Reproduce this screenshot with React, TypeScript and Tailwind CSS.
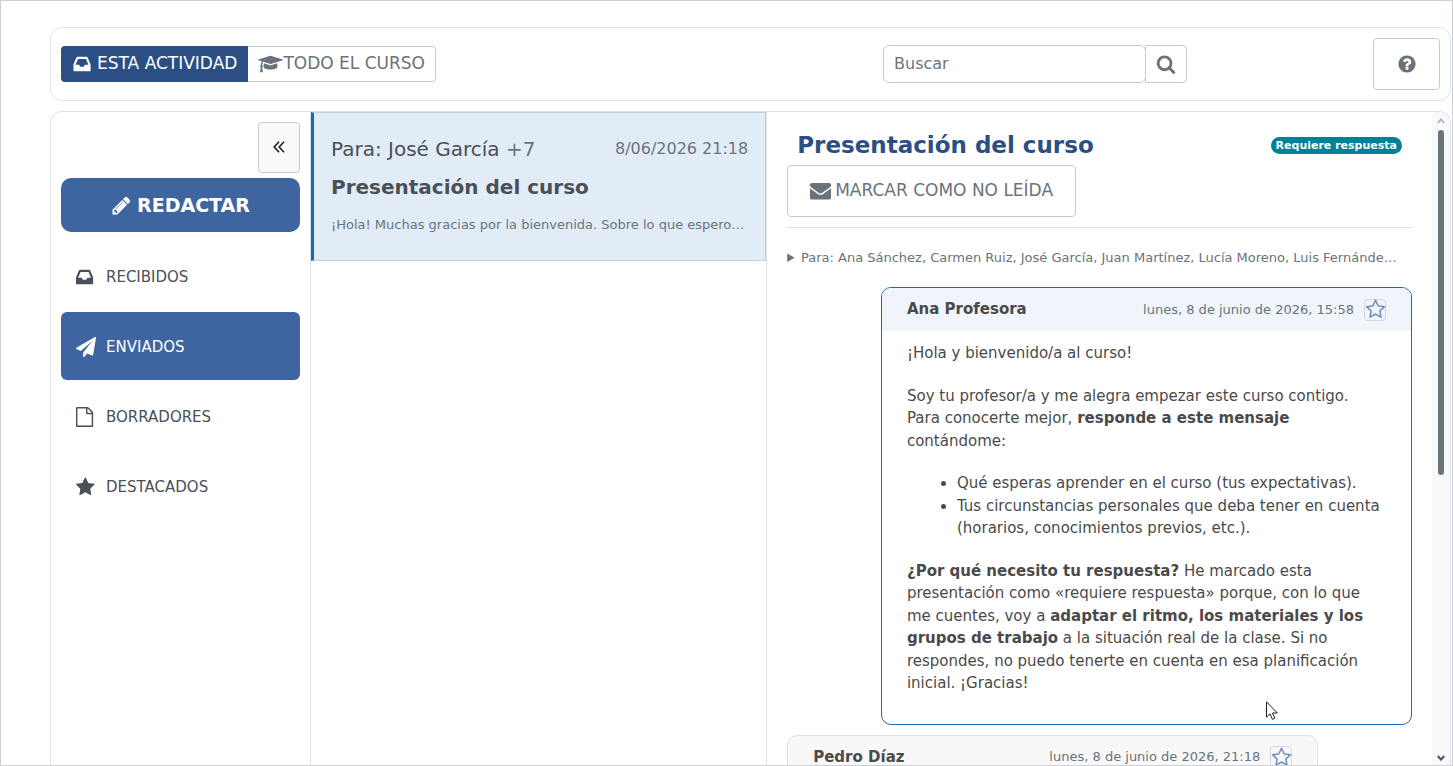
import type { ReactNode } from "react";

type IconProps = { d: string; className: string; viewBox?: string };

function Icon({ d, className, viewBox = "0 0 1792 1792" }: IconProps) {
  return (
    <svg viewBox={viewBox} className={className} fill="currentColor" aria-hidden="true">
      <path d={d} />
    </svg>
  );
}

const INBOX =
  "M1151 960h316q-1-3-2.5-8.5t-2.5-7.5l-212-496h-708l-212 496q-1 3-2.5 8.5t-2.5 7.5h316l95 192h320zm513 30v482q0 26-19 45t-45 19h-1408q-26 0-45-19t-19-45v-482q0-62 25-123l238-552q10-25 36.5-42t52.5-17h832q26 0 52.5 17t36.5 42l238 552q25 61 25 123z";
const PLANE =
  "M1764 11q33 24 27 64l-256 1536q-5 29-32 45-14 8-31 8-11 0-24-5l-453-185-242 295q-18 23-49 23-13 0-22-4-19-7-30.5-23.5t-11.5-36.5v-349l864-1059-1069 925-395-162q-37-14-40-55-2-40 32-59l1664-960q15-9 32-9 20 0 36 11z";
const FILE =
  "M1596 380q28 28 48 76t20 88v1152q0 40-28 68t-68 28h-1344q-40 0-68-28t-28-68v-1600q0-40 28-68t68-28h896q40 0 88 20t76 48zm-444-244v376h376q-10-29-22-41l-313-313q-12-12-41-22zm384 1528v-1024h-416q-40 0-68-28t-28-68v-416h-768v1536h1280z";
const STAR =
  "M1728 647q0 22-26 48l-363 354 86 500q1 7 1 20 0 21-10.5 35.5t-30.5 14.5q-19 0-40-12l-449-236-449 236q-22 12-40 12-21 0-31.5-14.5t-10.5-35.5q0-6 2-20l86-500-364-354q-25-27-25-48 0-37 56-46l502-73 225-455q19-41 49-41t49 41l225 455 502 73q56 9 56 46z";
const STAR_OUTLINE =
  "M1201 1004l306-297-422-62-189-382-189 382-422 62 306 297-73 421 378-199 377 199zm527-357q0 22-26 48l-363 354 86 500q1 7 1 20 0 50-41 50-19 0-40-12l-449-236-449 236q-22 12-40 12-21 0-31.5-14.5t-10.5-35.5q0-6 2-20l86-500-364-354q-25-27-25-48 0-37 56-46l502-73 225-455q19-41 49-41t49 41l225 455 502 73q56 9 56 46z";
const SEARCH =
  "M1216 832q0-185-131.5-316.5t-316.5-131.5-316.5 131.5-131.5 316.5 131.5 316.5 316.5 131.5 316.5-131.5 131.5-316.5zm512 832q0 52-38 90t-90 38q-54 0-90-38l-343-342q-179 124-399 124-143 0-273.5-55.5t-225-150-150-225-55.5-273.5 55.5-273.5 150-225 225-150 273.5-55.5 273.5 55.5 225 150 150 225 55.5 273.5q0 220-124 399l343 343q37 37 37 90z";
const QUESTION =
  "M1024 1376v-192q0-14-9-23t-23-9h-192q-14 0-23 9t-9 23v192q0 14 9 23t23 9h192q14 0 23-9t9-23zm256-672q0-88-55.5-163t-138.5-116-170-41q-243 0-371 213-15 24 8 42l132 100q7 6 19 6 16 0 25-12 53-68 86-92 34-24 86-24 48 0 85.5 26t37.5 59q0 38-20 61t-68 45q-63 28-115.5 86.5t-52.5 125.5v36q0 14 9 23t23 9h192q14 0 23-9t9-23q0-19 21.5-49.5t54.5-49.5q32-18 49-28.5t46-35 44.5-48 28-60.5 12.5-81zm384 192q0 209-103 385.5t-279.5 279.5-385.5 103-385.5-103-279.5-279.5-103-385.5 103-385.5 279.5-279.5 385.5-103 385.5 103 279.5 279.5 103 385.5z";
const PENCIL =
  "M491 1536l91-91-235-235-91 91v107h128v128h107zm523-928q0-22-22-22-10 0-17 7l-542 542q-7 7-7 17 0 22 22 22 10 0 17-7l542-542q7-7 7-17zm-54-192l416 416-832 832h-416v-416zm683 96q0 53-37 90l-166 166-416-416 166-165q36-38 90-38 53 0 91 38l235 234q37 39 37 91z";
const ENVELOPE =
  "M1792 710v794q0 66-47 113t-113 47h-1472q-66 0-113-47t-47-113v-794q44 49 101 87 362 246 497 345 57 42 92.5 65.5t94.5 48 110 24.5h2q51 0 110-24.5t94.5-48 92.5-65.5q170-123 498-345 57-39 100-87zm0-294q0 79-49 151t-122 123q-376 261-468 325-10 7-42.5 31t-54 38.5-52 32.5-57.5 27-50 9h-2q-23 0-50-9t-57.5-27-52-32.5-54-38.5-42.5-31q-91-64-262-182.5t-205-142.5q-62-42-117-115.5t-55-136.5q0-78 41.5-130t118.5-52h1472q65 0 112.5 47t47.5 113z";
const CAP =
  "M1774 836l18 316q4 69-82 128t-235 93.5-323 34.5-323-34.5-235-93.5-82-128l18-316 574 181q22 7 48 7t48-7zm530-324q0 23-22 31l-1120 352q-4 1-10 1t-10-1l-652-206q-43 34-71 111.5t-34 178.5q63 36 63 109 0 69-58 107l58 433q2 14-8 25-9 11-24 11h-192q-15 0-24-11-10-11-8-25l58-433q-58-38-58-107 0-73 65-111 11-207 98-330l-333-104q-22-8-22-31t22-31l1120-352q4-1 10-1t10 1l1120 352q22 8 22 31z";

const FOLDERS = [
  { label: "RECIBIDOS", icon: INBOX, viewBox: "128 0 1792 1792", active: false },
  { label: "ENVIADOS", icon: PLANE, viewBox: "0 0 1792 1792", active: true },
  { label: "BORRADORES", icon: FILE, viewBox: "128 0 1792 1792", active: false },
  { label: "DESTACADOS", icon: STAR, viewBox: "64 0 1792 1792", active: false },
];

function Toolbar() {
  return (
    <header className="grid shrink-0 grid-cols-[13fr_304px_4fr] items-center rounded-xl border border-[#dee2e6] px-[10px] py-[10px]">
      <div className="flex h-9" role="group" aria-label="Ámbito">
        <button className="flex items-center gap-[5px] rounded-l bg-[#2b4f85] px-[11px] text-[17px] text-white">
          <Icon d={INBOX} className="size-5" />
          ESTA ACTIVIDAD
        </button>
        <button className="flex items-center rounded-r border border-l-0 border-[#c8ccd0] px-[10px] text-[17px] text-[#6a737b]">
          <Icon d={CAP} viewBox="0 0 2304 1792" className="h-5 w-[25px]" />
          TODO EL CURSO
        </button>
      </div>
      <form className="flex h-[38px]" role="search" onSubmit={(e) => e.preventDefault()}>
        <input
          type="search"
          aria-label="Buscar"
          placeholder="Buscar"
          className="min-w-0 flex-1 rounded-md border border-[#c8ccd0] px-[10px] text-base text-[#495057] placeholder:text-[#6a737b]"
        />
        <button
          type="submit"
          aria-label="Buscar mensajes"
          className="-ml-px flex w-[42px] items-center justify-center rounded-r border border-[#c8ccd0] text-[#6a737b]"
        >
          <Icon d={SEARCH} className="size-5" />
        </button>
      </form>
      <button
        aria-label="Ayuda"
        className="flex h-[52px] w-[67px] items-center justify-center justify-self-end rounded border border-[#c8ccd0] text-[#6a737b]"
      >
        <Icon d={QUESTION} className="size-5" />
      </button>
    </header>
  );
}

function Sidebar() {
  return (
    <nav className="flex w-[260px] shrink-0 flex-col border-r border-[#dee2e6] p-[10px]" aria-label="Carpetas">
      <button
        aria-label="Contraer menú"
        className="flex h-[51px] w-[42px] items-center justify-center self-end rounded border border-[#c8ccd0] bg-[#f8f9fa] pb-0.5 text-[#1d2125]"
      >
        <svg viewBox="0 0 12 12" className="size-3" fill="none" stroke="currentColor" strokeWidth="1.6" aria-hidden="true">
          <path d="M6 0.8 1.2 6 6 11.2M11 0.8 6.2 6 11 11.2" />
        </svg>
      </button>
      <button className="mt-[5px] flex h-[54px] items-center justify-center gap-[5px] rounded-[10px] bg-[#3f65a0] text-[19px] font-bold text-white">
        <Icon d={PENCIL} className="size-[21px]" />
        REDACTAR
      </button>
      <ul className="mt-[10px] flex flex-col gap-[2px]">
        {FOLDERS.map((f) => (
          <li key={f.label}>
            <a
              href="#"
              aria-current={f.active ? "page" : undefined}
              className={
                f.active
                  ? "flex h-[68px] items-center gap-[10px] rounded-md bg-[#3f65a0] px-[15px] pt-0.5 text-[15px] text-white"
                  : "flex h-[68px] items-center gap-[10px] rounded-md px-[15px] pt-0.5 text-[15px] text-[#495057]"
              }
            >
              <Icon d={f.icon} viewBox={f.viewBox} className="size-5" />
              {f.label}
            </a>
          </li>
        ))}
      </ul>
    </nav>
  );
}

function ConversationList() {
  return (
    <section className="min-w-0 flex-[2] border-r border-[#dee2e6]" aria-label="Mensajes">
      <a
        href="#"
        className="flex h-[149px] flex-col border border-l-3 border-[#c2cfdd] border-l-[#0f6cbf] bg-[#e2ecf7] px-[17px] pt-[21px] text-[#495057]"
      >
        <div className="flex items-center justify-between leading-[30px]">
          <span className="text-xl leading-[30px]">
            Para: José García <span className="text-[#6a737b]">+7</span>
          </span>
          <time className="text-base text-[#6a737b]">8/06/2026 21:18</time>
        </div>
        <h2 className="mt-2 text-xl leading-[30px] font-bold">Presentación del curso</h2>
        <p className="mt-[13px] text-[13px] leading-5 whitespace-nowrap text-[#6a737b]">
          ¡Hola! Muchas gracias por la bienvenida. Sobre lo que espero…
        </p>
      </a>
    </section>
  );
}

type MessageProps = { author: string; date: string; own?: boolean; children?: ReactNode };

function Message({ author, date, own = false, children }: MessageProps) {
  return (
    <article
      className={
        own
          ? "relative w-[85%] shrink-0 self-end overflow-hidden rounded-[10px] border border-[#0f6cbf] bg-white"
          : "relative w-[85%] shrink-0 overflow-hidden rounded-[10px] border border-[#dee2e6] bg-[#f8f8f8]"
      }
    >
      <div className={own ? "flex h-[43px] items-center bg-[#eff5fa] px-[25px]" : "flex h-[43px] items-center px-[25px]"}>
        <h3 className="text-[15px] font-bold">{author}</h3>
        <time className="ml-auto text-[13px] text-[#6a737b]">{date}</time>
        <button
          aria-label="Destacar mensaje"
          className="ml-[10px] flex size-[22px] items-center justify-center rounded border border-[#d5d9dd] text-[#6f8cb8]"
        >
          <Icon d={STAR_OUTLINE} className="size-[21px] shrink-0" />
        </button>
      </div>
      {children}
    </article>
  );
}

function Reader() {
  return (
    <main className="flex min-w-0 flex-[3] overflow-hidden">
      <div className="flex min-w-0 flex-1 flex-col px-5 pt-4 text-[#4a4a4a]">
        <div className="mb-0.5 flex h-[35px] shrink-0 items-center justify-between px-[10px]">
          <h1 className="text-[23px] font-bold text-[#2b4f85]">Presentación del curso</h1>
          <span className="rounded-full bg-[#008196] px-[5px] text-[11px] leading-[17px] font-bold text-white">
            Requiere respuesta
          </span>
        </div>
        <button className="flex h-[52px] shrink-0 items-center gap-1 self-start rounded border border-[#c8ccd0] px-[22px] text-[17px] text-[#6a737b]">
          <Icon d={ENVELOPE} className="mb-0.5 size-[21px]" />
          MARCAR COMO NO LEÍDA
        </button>
        <hr className="mt-[10px] border-[#dee2e6]" />
        <details className="mt-5 shrink-0 text-[13px] leading-5 text-[#6a737b]">
          <summary className="whitespace-nowrap">
            Para: Ana Sánchez, Carmen Ruiz, José García, Juan Martínez, Lucía Moreno, Luis Fernánde…
          </summary>
        </details>
        <div className="mt-[19px] flex flex-col gap-[10px]">
          <Message author="Ana Profesora" date="lunes, 8 de junio de 2026, 15:58" own>
            <div className="flex flex-col gap-5 px-[25px] pt-[11px] pb-[29px] text-[15px] leading-normal">
              <p>¡Hola y bienvenido/a al curso!</p>
              <p>
                Soy tu profesor/a y me alegra empezar este curso contigo.
                <br />
                Para conocerte mejor, <strong>responde a este mensaje</strong>
                <br />
                contándome:
              </p>
              <ul className="list-disc pl-[50px]">
                <li>Qué esperas aprender en el curso (tus expectativas).</li>
                <li>Tus circunstancias personales que deba tener en cuenta (horarios, conocimientos previos, etc.).</li>
              </ul>
              <p>
                <strong>¿Por qué necesito tu respuesta?</strong> He marcado esta presentación como «requiere respuesta»
                porque, con lo que me cuentes, voy a{" "}
                <strong>adaptar el ritmo, los materiales y los grupos de trabajo</strong> a la situación real de la
                clase. Si no respondes, no puedo tenerte en cuenta en esa planificación inicial. ¡Gracias!
              </p>
            </div>
            <svg
              viewBox="0 0 12 19"
              className="absolute right-[133px] bottom-[4px] h-[19px] w-3"
              fill="white"
              stroke="#1c1c2b"
              aria-hidden="true"
            >
              <path d="M.5.8V16.2L4 12.8 6.4 18.3 8.8 17.2 6.5 12H11.3Z" />
            </svg>
          </Message>
          <Message author="Pedro Díaz" date="lunes, 8 de junio de 2026, 21:18" />
        </div>
      </div>
      <div className="flex w-[18px] shrink-0 flex-col items-center bg-[#f8f9fa] pt-[6px] pb-1" aria-hidden="true">
        <svg viewBox="0 0 8 6" className="h-[6px] w-2" fill="none" stroke="#b0b4b8" strokeWidth="1.8">
          <path d="M.8 5 4 1.4 7.2 5" />
        </svg>
        <div className="mt-[6px] h-[345px] w-[6px] rounded-full bg-[#6a737b]" />
        <svg viewBox="0 0 8 6" className="mt-auto h-[6px] w-2" fill="none" stroke="#495057" strokeWidth="2">
          <path d="M.8 1 4 4.6 7.2 1" />
        </svg>
      </div>
    </main>
  );
}

export default function App() {
  return (
    <div className="flex h-screen flex-col gap-[10px] overflow-hidden border border-[#ced0d8] bg-white pt-[26px] pr-px pl-[49px] font-['Verdana','DejaVu_Sans',sans-serif]">
      <Toolbar />
      <div className="flex min-h-0 flex-1 overflow-hidden rounded-t-xl border border-b-0 border-[#dee2e6]">
        <Sidebar />
        <ConversationList />
        <Reader />
      </div>
    </div>
  );
}
